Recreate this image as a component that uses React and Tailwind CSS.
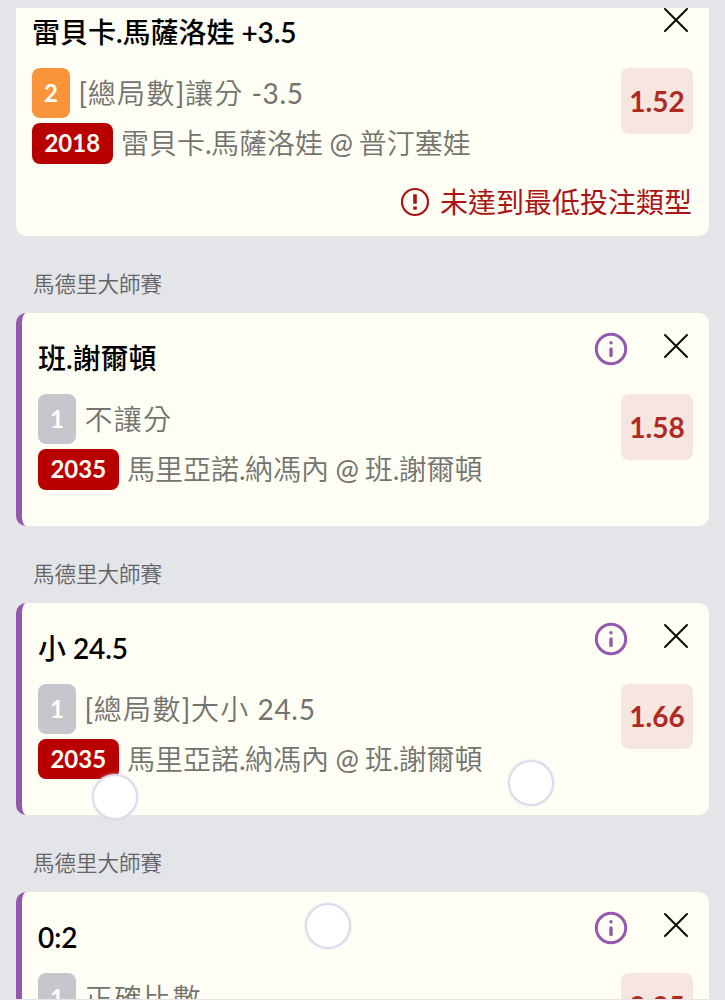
import React from 'react';

const bets = [
  {
    title: '雷貝卡.馬薩洛娃 +3.5',
    side: '2',
    market: '[總局數]讓分 -3.5',
    code: '2018',
    match: '雷貝卡.馬薩洛娃 @ 普汀塞娃',
    odds: '1.52',
    error: '未達到最低投注類型',
  },
  {
    league: '馬德里大師賽',
    title: '班.謝爾頓',
    side: '1',
    market: '不讓分',
    code: '2035',
    match: '馬里亞諾.納馮內 @ 班.謝爾頓',
    odds: '1.58',
  },
  {
    league: '馬德里大師賽',
    title: '小 24.5',
    side: '1',
    market: '[總局數]大小 24.5',
    code: '2035',
    match: '馬里亞諾.納馮內 @ 班.謝爾頓',
    odds: '1.66',
  },
  {
    league: '馬德里大師賽',
    title: '0:2',
    side: '1',
    market: '正確比數',
    code: '2035',
    match: '馬里亞諾.納馮內 @ 班.謝爾頓',
    odds: '2.25',
  },
];

const CloseIcon = () => (
  <svg className="w-[26px] h-[26px]" viewBox="0 0 26 26" fill="none" stroke="#0b0b08" strokeWidth="2" strokeLinecap="round">
    <path d="M2 2 L24 24 M24 2 L2 24" />
  </svg>
);

const InfoIcon = () => (
  <svg className="w-[34px] h-[34px]" viewBox="0 0 34 34" fill="none">
    <circle cx="17" cy="17" r="14.7" stroke="#9459ae" strokeWidth="3" />
    <circle cx="17" cy="10.7" r="1.7" fill="#9459ae" />
    <path d="M17 17 V23.5" stroke="#9459ae" strokeWidth="3.4" strokeLinecap="round" />
  </svg>
);

const ErrorIcon = () => (
  <svg className="w-[30px] h-[30px]" viewBox="0 0 30 30" fill="none">
    <circle cx="15" cy="15" r="13" stroke="#ac1313" strokeWidth="2.2" />
    <path d="M15 7.3 V16.8 M15 19.6 V22.8" stroke="#ac1313" strokeWidth="3.6" />
  </svg>
);

// Los caracteres latinos llevan un peso mayor que los chinos
const MixedText = ({ text, latin }) =>
  text.split(/([\x20-\x7e]+)/).map((part, i) =>
    i % 2 ? (
      <span key={i} className={latin}>
        {part}
      </span>
    ) : (
      part
    )
  );

const BetCard = ({ bet }) => (
  <article
    className={
      bet.error
        ? 'h-[249px] bg-[#fffef5] rounded-[10px] px-4'
        : 'h-[212.6px] bg-[#fffef5] rounded-[10px] border-l-[6px] border-[#9459ae] px-4'
    }
  >
    <header className="flex h-[81px] justify-between">
      <h2 className="pt-[31px] text-[28px] leading-[28px] font-medium text-black whitespace-pre">
        <MixedText text={bet.title} latin="font-semibold tracking-[-0.1px]" />
      </h2>
      <div className="flex gap-[34.5px] pr-[4.5px]">
        {!bet.error && (
          <button className="h-[34px] mt-[19px]">
            <InfoIcon />
          </button>
        )}
        <button className="h-[26px] mt-[20px]">
          <CloseIcon />
        </button>
      </div>
    </header>

    <div className="flex justify-between items-start">
      <div className="flex flex-col gap-[5px] text-[28px] leading-[28px] font-[350] text-[#73736f]">
        <div className="flex h-[50px] items-center gap-[8.5px]">
          <span
            className={
              bet.side === '2'
                ? 'flex w-[38px] h-[50px] items-center justify-center rounded-lg bg-[#f9943b] text-[24px] font-bold text-[#fffef5]'
                : 'flex w-[38px] h-[50px] items-center justify-center rounded-lg bg-[#c8c6cd] text-[24px] font-bold text-[#fffef5]'
            }
          >
            {bet.side}
          </span>
          <span className="tracking-[1.3px] whitespace-pre">
            <MixedText text={bet.market} latin="font-normal tracking-[0.7px]" />
          </span>
        </div>
        <div className="flex h-[40.5px] items-center gap-[8.5px]">
          <span className="flex w-[80.5px] h-[40.5px] items-center justify-center rounded-lg bg-[#b80000] text-[24px] font-bold text-[#fffef5]">
            {bet.code}
          </span>
          <span className="whitespace-pre">
            <MixedText text={bet.match} latin="font-normal tracking-[-0.7px]" />
          </span>
        </div>
      </div>
      <div className="flex w-[72px] h-[65.5px] items-center justify-center rounded-lg bg-[#f6e6df] text-[28px] font-bold text-[#b02a24]">
        {bet.odds}
      </div>
    </div>

    {/* Aviso de validación */}
    {bet.error && (
      <div className="flex justify-end items-center gap-[10px] pt-[23.5px] pr-[1px] text-[28px] leading-[30px] text-[#ac1313]">
        <ErrorIcon />
        <span>{bet.error}</span>
      </div>
    )}
  </article>
);

// Burbujas que flotan sobre la lista
const Bubbles = () => (
  <>
    <div className="absolute left-[92px] top-[774px] w-[46px] h-[46px] rounded-full border-2 border-[#dcdbea] bg-white shadow-[0_0_3px_#e2e1ee]" />
    <div className="absolute left-[508px] top-[760px] w-[46px] h-[46px] rounded-full border-2 border-[#dcdbea] bg-white shadow-[0_0_3px_#e2e1ee]" />
    <div className="absolute left-[305px] top-[903px] w-[46px] h-[46px] rounded-full border-2 border-[#dcdbea] bg-white shadow-[0_0_3px_#e2e1ee]" />
  </>
);

const App = () => {
  return (
    <div className="relative w-[725px] h-[1000px] overflow-hidden bg-[#e4e5e8] pt-2 font-[Lato,'Noto_Sans_CJK_TC',sans-serif]">
      <main className="h-[991px] overflow-hidden pl-4 pr-4">
        <div className="-mt-[21px] w-[693px]">
          {bets.map((bet, i) => (
            <section key={i}>
              {bet.league && (
                <h3 className="h-[77px] pt-[36px] pl-[17px] text-[21.5px] leading-[24px] font-[350] text-[#626366]">{bet.league}</h3>
              )}
              <BetCard bet={bet} />
            </section>
          ))}
        </div>
      </main>
      <Bubbles />
    </div>
  );
};

export default App;
